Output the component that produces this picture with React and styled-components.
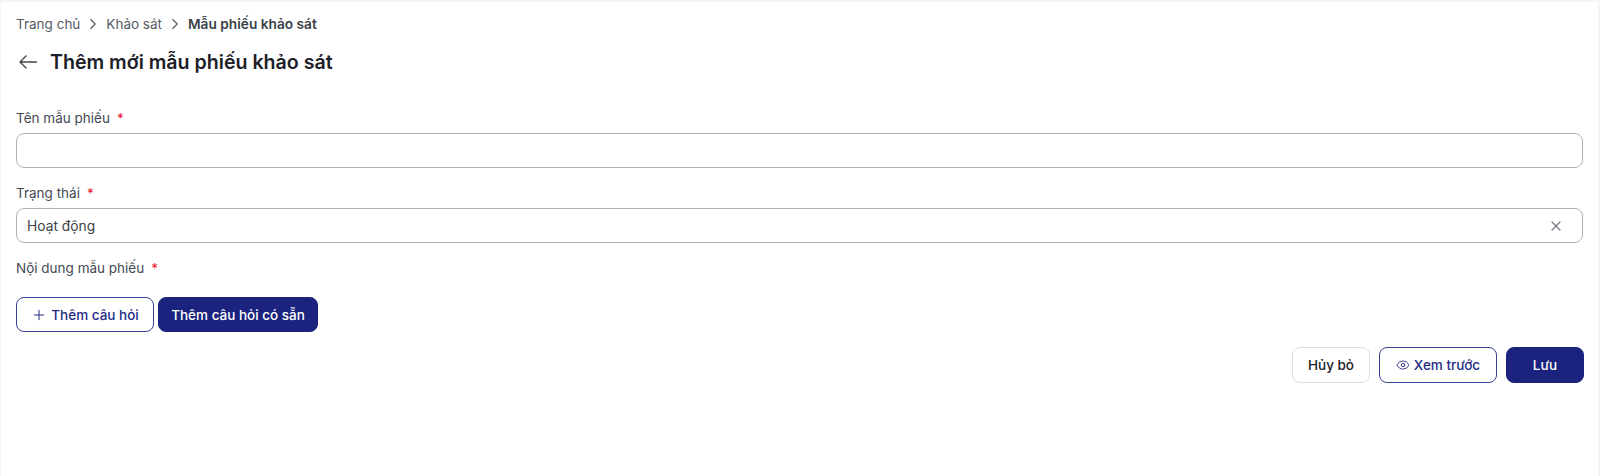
import React from "react";
import styled, { createGlobalStyle } from "styled-components";
import { ChevronRight, Eye, Plus, X } from "lucide-react";

const GlobalStyle = createGlobalStyle`
  * {
    box-sizing: border-box;
  }

  body {
    margin: 0;
    background: #f5f5f5;
    font-family: Inter, "Noto Sans", sans-serif;
  }
`;

const Page = styled.div`
  height: 476px;
  margin: 2px 2px 0 1px;
  padding: 12px 15px 0 15px;
  background: #fff;
  overflow: hidden;
`;

const Breadcrumb = styled.nav`
  display: flex;
  align-items: center;
  height: 20px;
  font-size: 13.5px;
  color: #555b66;
`;

const CrumbSeparator = styled(ChevronRight)`
  width: 18px;
  height: 18px;
  margin: 0 4px;
  color: #555b66;
`;

const CurrentCrumb = styled.span`
  font-size: 13.7px;
  font-weight: 600;
  color: #3b3f47;
`;

const TitleRow = styled.div`
  display: flex;
  align-items: center;
  gap: 13px;
  height: 32px;
  margin-top: 12px;
  color: #1c2027;
`;

const BackIcon = styled.svg`
  width: 18px;
  height: 14px;
  margin-left: 3px;
  fill: none;
  stroke: #444;
  stroke-width: 1.4;
  stroke-linecap: round;
  stroke-linejoin: round;
`;

const Title = styled.h1`
  margin: 0;
  font-size: 19.6px;
  font-weight: 600;
`;

const Label = styled.label`
  display: block;
  height: 20px;
  font-size: 13.5px;
  line-height: 20px;
  color: #444a54;
`;

const Required = styled.span`
  margin-left: 7px;
  color: #e5222f;
`;

const Field = styled.div`
  margin-top: ${(props) => props.$top}px;
`;

const InputBox = styled.div`
  display: flex;
  align-items: center;
  justify-content: space-between;
  height: 35px;
  margin-top: 5px;
  padding: 0 18px 0 10px;
  border: 1px solid #b2b2b2;
  border-radius: 8px;
  background: #fff;
  font-size: 13.8px;
  color: #3b3f47;
`;

const ClearIcon = styled(X)`
  width: 16px;
  height: 16px;
  color: #777c86;
`;

const QuestionButtons = styled.div`
  display: flex;
  gap: 4px;
  margin-top: 19px;
`;

const Actions = styled.div`
  display: flex;
  justify-content: flex-end;
  gap: 9px;
  margin: 15px -1px 0 0;
`;

const Button = styled.button`
  display: inline-flex;
  align-items: center;
  justify-content: center;
  gap: ${(props) => props.$gap || 0}px;
  width: ${(props) => props.$width}px;
  height: ${(props) => props.$height || 35}px;
  padding: 0;
  border: 1px solid #3a4196;
  border-radius: 8px;
  background: #fff;
  color: #252c85;
  font-family: inherit;
  font-size: 13.5px;
  font-weight: 500;
`;

const PrimaryButton = styled(Button)`
  background: #1b237e;
  border-color: #1b237e;
  color: #fff;
`;

const CancelButton = styled(Button)`
  border-color: #dedede;
  color: #1c2027;
`;

const App = () => {
  return (
    <>
      <GlobalStyle />
      <Page>
        <Breadcrumb>
          <span>Trang chủ</span>
          <CrumbSeparator strokeWidth={1.5} />
          <span>Khảo sát</span>
          <CrumbSeparator strokeWidth={1.5} />
          <CurrentCrumb>Mẫu phiếu khảo sát</CurrentCrumb>
        </Breadcrumb>
        <TitleRow>
          <BackIcon viewBox="0 0 18 14">
            <path d="M1 7H17.5M7 1L1 7L7 13" />
          </BackIcon>
          <Title>Thêm mới mẫu phiếu khảo sát</Title>
        </TitleRow>
        <Field $top={30}>
          <Label>
            Tên mẫu phiếu<Required>*</Required>
          </Label>
          <InputBox />
        </Field>
        <Field $top={15}>
          <Label>
            Trạng thái<Required>*</Required>
          </Label>
          <InputBox>
            Hoạt động
            <ClearIcon strokeWidth={1.8} />
          </InputBox>
        </Field>
        <Field $top={15}>
          <Label>
            Nội dung mẫu phiếu<Required>*</Required>
          </Label>
        </Field>
        <QuestionButtons>
          <Button $width={138} $gap={4}>
            <Plus size={16} strokeWidth={1.5} />
            Thêm câu hỏi
          </Button>
          <PrimaryButton $width={160}>Thêm câu hỏi có sẵn</PrimaryButton>
        </QuestionButtons>
        <Actions>
          <CancelButton $width={78} $height={36}>
            Hủy bỏ
          </CancelButton>
          <Button $width={118} $height={36} $gap={4}>
            <Eye size={14} strokeWidth={1.5} />
            Xem trước
          </Button>
          <PrimaryButton $width={78} $height={36}>
            Lưu
          </PrimaryButton>
        </Actions>
      </Page>
    </>
  );
};

export default App;
